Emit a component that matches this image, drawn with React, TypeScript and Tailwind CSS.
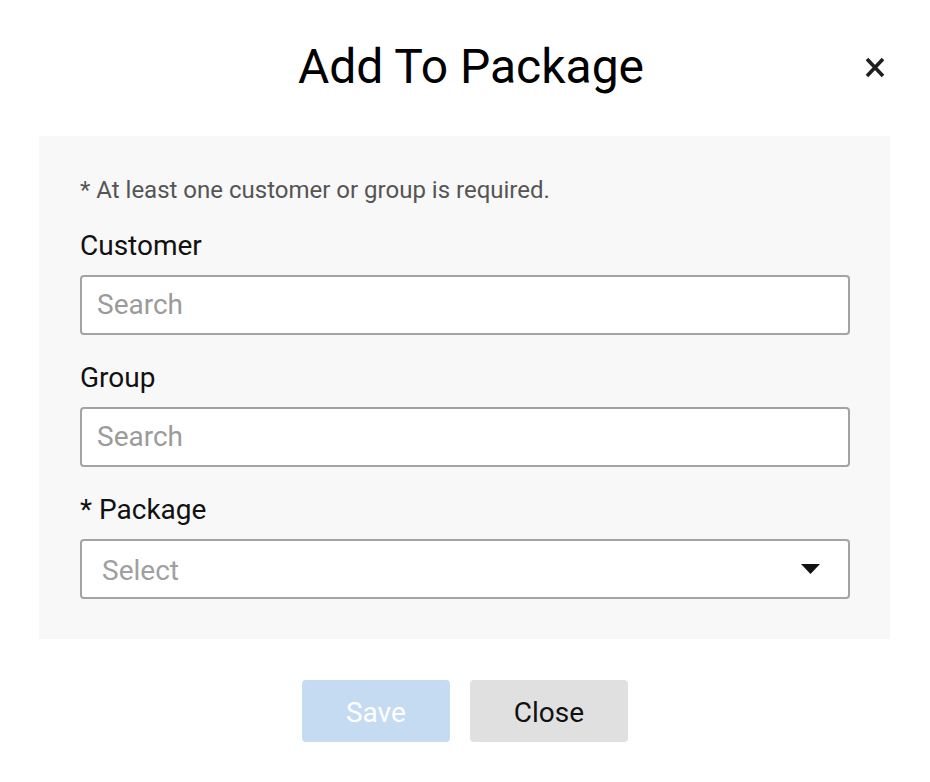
import React from 'react'

function CloseIcon() {
  return (
    <svg width="20" height="21" viewBox="0 0 20 21" aria-hidden="true">
      <path d="M2 2 L18 19 M18 2 L2 19" stroke="#1f1f1f" strokeWidth="3.6" fill="none" />
    </svg>
  )
}

function Caret() {
  return (
    <svg width="19" height="10" viewBox="0 0 19 10" aria-hidden="true">
      <path d="M0 0 H19 L9.5 10 Z" fill="#111" />
    </svg>
  )
}

function Field({ label, placeholder }: { label: string; placeholder: string }) {
  return (
    <div className="flex flex-col">
      <label className="text-[28px] leading-[33px] text-[#111] mb-[13px]">{label}</label>
      <input
        type="text"
        placeholder={placeholder}
        className="h-[60px] w-full rounded-[4px] border-2 border-[#a3a3a3] bg-white pl-[15px] pb-[2px] text-[28px] text-[#222] placeholder:text-[#9b9b9b] outline-none"
      />
    </div>
  )
}

export default function App() {
  return (
    <div className="min-h-[782px] w-[930px] bg-white font-['Roboto',sans-serif]">
      {/* Header */}
      <div className="flex items-center pl-[77px] pr-[45px] pt-[39px]">
        <h1 className="flex-1 text-center text-[48px] leading-[56px] font-normal text-black">
          Add To Package
        </h1>
        <button className="flex h-[21px] w-[20px] items-center justify-center" aria-label="Close">
          <CloseIcon />
        </button>
      </div>

      {/* Form panel */}
      <div className="mx-[39px] mt-[41px] mr-[40px] bg-[#f8f8f8] pl-[41px] pr-[40px] pt-[40px] pb-[40px]">
        <p className="text-[24px] leading-[28px] text-[#555]">
          * At least one customer or group is required.
        </p>
        <div className="mt-[25px] flex flex-col gap-[26px]">
          <Field label="Customer" placeholder="Search" />
          <Field label="Group" placeholder="Search" />
          <div className="flex flex-col">
            <label className="text-[28px] leading-[33px] text-[#111] mb-[13px]">* Package</label>
            <div className="flex h-[60px] items-center justify-between rounded-[4px] border-2 border-[#a3a3a3] bg-white pl-[20px] pr-[28px]">
              <span className="pt-[3px] text-[28px] text-[#a0a0a0]">Select</span>
              <Caret />
            </div>
          </div>
        </div>
      </div>

      {/* Actions */}
      <div className="mt-[41px] flex justify-center gap-[20px]">
        <button
          disabled
          className="h-[62px] rounded-[4px] bg-[#c5dbf2] px-[44px] pt-[3px] text-[28px] text-white"
        >
          Save
        </button>
        <button className="h-[62px] rounded-[4px] bg-[#e0e0e0] px-[44px] pt-[3px] text-[28px] text-[#111]">
          Close
        </button>
      </div>
    </div>
  )
}
